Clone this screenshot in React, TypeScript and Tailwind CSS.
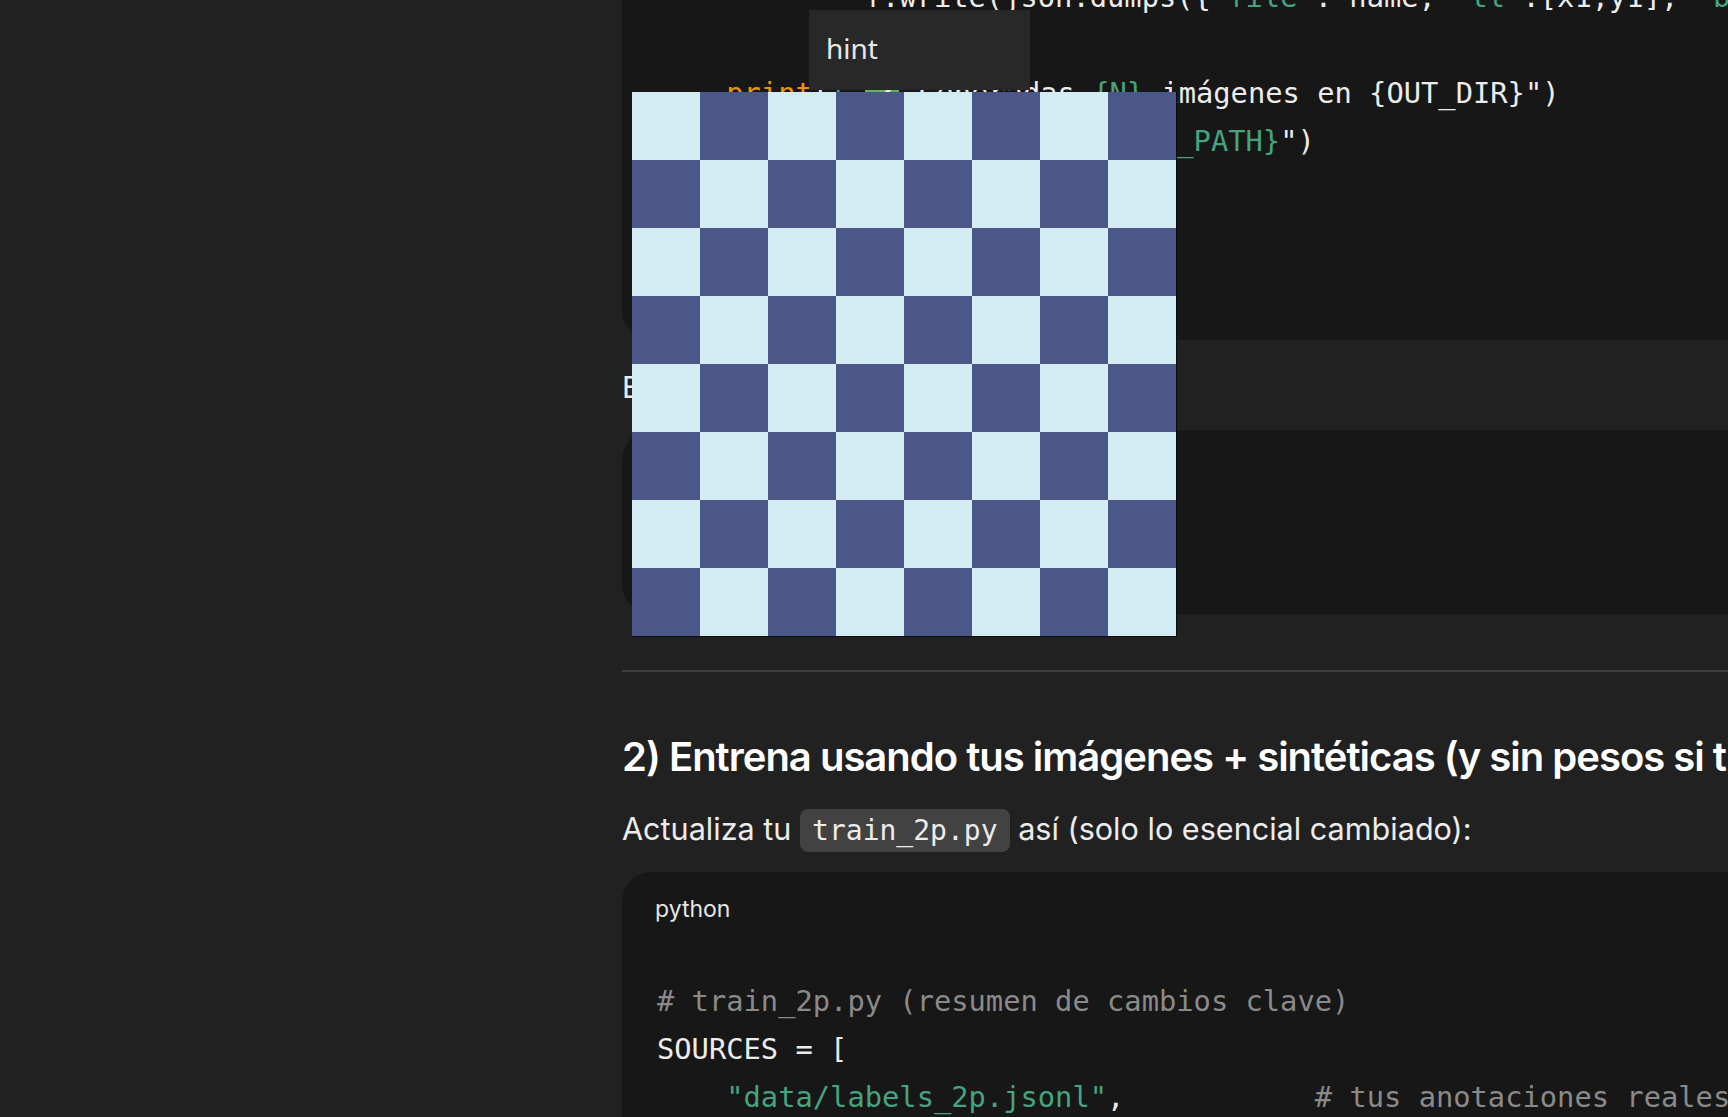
import React from "react";

const G = "text-[#45a47f]";
const W = "text-[#ececec]";
const O = "text-[#e9950c]";
const C = "text-[#8a8a8a]";

function Row({ children }: { children?: React.ReactNode }) {
  return <div className="h-[48px] leading-[48px] whitespace-pre">{children ?? " "}</div>;
}

function Board() {
  const cells = [];
  for (let r = 0; r < 8; r++) {
    for (let c = 0; c < 8; c++) {
      const light = (r + c) % 2 === 0;
      cells.push(
        <div key={`${r}-${c}`} className={light ? "w-[68px] h-[68px] bg-[#d3ecf3]" : "w-[68px] h-[68px] bg-[#4a5788]"} />
      );
    }
  }
  return (
    <div className="absolute left-[632px] top-[92px] z-20 grid grid-cols-[repeat(8,68px)] border-r border-b border-[#0b0b14]">
      {cells}
    </div>
  );
}

export default function App() {
  return (
    <div className="relative w-[1728px] h-[1117px] overflow-hidden bg-[#212121] flex items-start font-['Inter',sans-serif]">
      <div className="w-[622px] shrink-0" />
      <div className="w-[1500px] shrink-0 block text-[#ececec]">
        {/* top code block */}
        <div className="-mt-[75px] h-[415px] bg-[#171717] rounded-b-[30px] pt-[48px] pl-[35px] font-['DejaVu_Sans_Mono',monospace] text-[28.75px]">
          <Row>
            <span className={W}>{"            f.write(json.dumps({"}</span>
            <span className={G}>"file"</span>
            <span className={W}>{": name, "}</span>
            <span className={G}>"tl"</span>
            <span className={W}>{":[x1,y1], "}</span>
            <span className={G}>"br"</span>
            <span className={W}>{":[x2,y2]}) + "}</span>
            <span className={G}>"\n"</span>
            <span className={W}>)</span>
          </Row>
          <Row />
          <Row>
            <span className={W}>{"    "}</span>
            <span className={O}>print</span>
            <span className={W}>(</span>
            <span className={G}>f"</span>
            <span className="inline-flex w-[37px] align-middle">
              <span className="inline-flex w-[34px] h-[34px] rounded-[7px] bg-[#5cb85c] items-center justify-center">
                <svg width="24" height="24" viewBox="0 0 24 24" fill="none" stroke="white" strokeWidth="3.5" strokeLinecap="round" strokeLinejoin="round">
                  <path d="M5 12.5l4.5 4.5L19 7" />
                </svg>
              </span>
            </span>
            <span className={W}>{" Generadas "}</span>
            <span className={G}>{"{N}"}</span>
            <span className={W}>{" imágenes en {OUT_DIR}\")"}</span>
          </Row>
          <Row>
            <span className={W}>{"    "}</span>
            <span className={O}>print</span>
            <span className={W}>(</span>
            <span className={G}>{"f\"Etiquetas: {LABELS_PATH}"}</span>
            <span className={W}>{"\")"}</span>
          </Row>
        </div>

        <p className="mt-[23px] text-[30px] leading-[48px] whitespace-nowrap">Ejecuta:</p>

        {/* second code block */}
        <div className="mt-[19px] h-[184px] bg-[#171717] rounded-[30px] pt-[22px] pl-[33px]">
          <div className="text-[23px] leading-[30px] text-[#e5e5e5]">bash</div>
          <div className="mt-[40px] font-['DejaVu_Sans_Mono',monospace] text-[28.75px] leading-[48px] whitespace-pre">
            python gen_synth.py
          </div>
        </div>

        <div className="mt-[56px] h-[2px] bg-[#3f3f3f]" />

        <h3 className="mt-[61px] text-[40px] leading-[48px] tracking-[-0.025em] font-semibold text-white whitespace-nowrap">
          2) Entrena usando tus imágenes + sintéticas (y sin pesos si tienes pocas)
        </h3>

        <p className="mt-[24px] text-[30.6px] leading-[48px] whitespace-nowrap">
          Actualiza tu{" "}
          <span className="inline-block h-[43px] leading-[43px] align-baseline px-[12px] rounded-[8px] bg-[#424242] font-['DejaVu_Sans_Mono',monospace] text-[28px] text-[#ececec]">
            train_2p.py
          </span>{" "}
          así (solo lo esencial cambiado):
        </p>

        {/* third code block */}
        <div className="mt-[19px] bg-[#171717] rounded-t-[30px] pt-[22px] pl-[33px] pb-[40px]">
          <div className="text-[23px] leading-[30px] text-[#e5e5e5]">python</div>
          <div className="mt-[53px] pl-[2px] font-['DejaVu_Sans_Mono',monospace] text-[28.75px]">
            <Row>
              <span className={C}># train_2p.py (resumen de cambios clave)</span>
            </Row>
            <Row>
              <span className={W}>SOURCES = [</span>
            </Row>
            <Row>
              <span className={W}>{"    "}</span>
              <span className={G}>"data/labels_2p.jsonl"</span>
              <span className={W}>,</span>
              <span className={C}>{"           # tus anotaciones reales"}</span>
            </Row>
            <Row>
              <span className={W}>{"    "}</span>
              <span className={G}>"data/synth/labels.jsonl"</span>
              <span className={W}>,</span>
              <span className={C}>{"        # sintéticas"}</span>
            </Row>
            <Row>
              <span className={W}>]</span>
            </Row>
          </div>
        </div>
      </div>

      {/* hint tooltip */}
      <div className="absolute left-[809px] top-[10px] z-10 w-[221px] h-[80px] bg-[#282828] pl-[17px] pt-[18px]">
        <span className="font-['Noto_Sans',sans-serif] text-[28px] leading-[40px] text-[#e8e8e8]">hint</span>
      </div>

      <Board />
    </div>
  );
}
